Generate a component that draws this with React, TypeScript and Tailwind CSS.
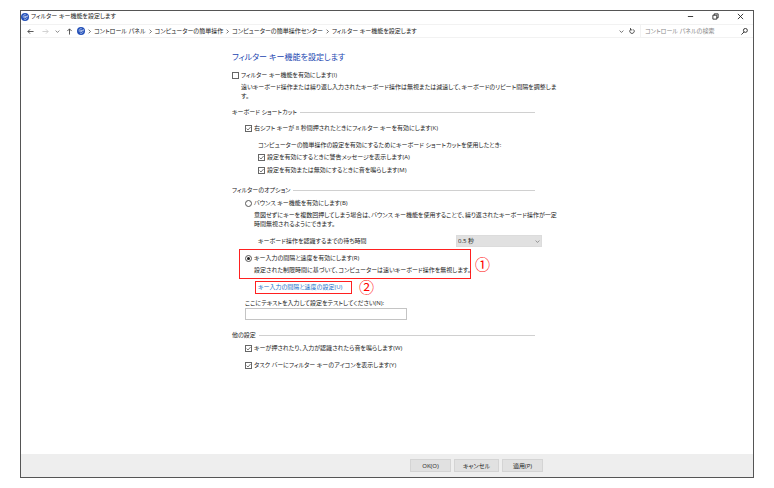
import { useState, type ReactNode } from "react";

const crumbs = [
  "コントロール パネル",
  "コンピューターの簡単操作",
  "コンピューターの簡単操作センター",
  "フィルター キー機能を設定します",
];

function AccessIcon() {
  return (
    <svg viewBox="0 0 16 16" className="size-2 shrink-0" aria-hidden="true">
      <circle cx="8" cy="8" r="8" fill="#2450b8" />
      <path d="M3.500 6.500a5 5 0 0 1 6.500-3M12.500 9.500a5 5 0 0 1-6.500 3" fill="none" stroke="#b9d0f6" strokeWidth="1.3" />
      <path d="M3.500 8h5M7 5.500 9.500 8 7 10.500M12.500 4.500v3h-3" fill="none" stroke="#fff" strokeWidth="1.4" />
    </svg>
  );
}

function Icon({ d, className }: { d: string; className: string }) {
  return (
    <svg viewBox="0 0 16 16" fill="none" stroke="currentColor" strokeWidth="2" className={className} aria-hidden="true">
      <path d={d} />
    </svg>
  );
}

const CHEVRON_DOWN = "M2 5l6 6 6-6";
const CHEVRON_RIGHT = "M5 2l6 6-6 6";

function Check({ label, initial = false }: { label: string; initial?: boolean }) {
  const [checked, setChecked] = useState(initial);
  return (
    <label className="flex h-[10px] items-center gap-[2px] whitespace-nowrap">
      <span className="grid shrink-0">
        <input
          type="checkbox"
          checked={checked}
          onChange={(e) => setChecked(e.target.checked)}
          className="peer col-start-1 row-start-1 size-[7px] appearance-none border border-[#666] bg-white"
        />
        <svg viewBox="0 0 7 7" className="pointer-events-none invisible col-start-1 row-start-1 size-[7px] peer-checked:visible">
          <path d="M1.6 3.6 3 5 5.6 2" fill="none" stroke="#444" strokeWidth="0.7" />
        </svg>
      </span>
      {label}
    </label>
  );
}

function Radio({ label, initial = false }: { label: string; initial?: boolean }) {
  return (
    <label className="flex h-[10px] items-center gap-[2px] whitespace-nowrap">
      <span className="grid shrink-0 place-items-center">
        <input
          type="radio"
          name="filter"
          defaultChecked={initial}
          className="peer col-start-1 row-start-1 size-[7px] appearance-none rounded-full border border-[#555] bg-white"
        />
        <span className="pointer-events-none invisible col-start-1 row-start-1 size-[3px] rounded-full bg-[#222] peer-checked:visible" />
      </span>
      {label}
    </label>
  );
}

function SectionTitle({ children }: { children: ReactNode }) {
  return (
    <h2 className="mr-[7px] flex h-[10px] items-center gap-[3px] whitespace-nowrap">
      {children}
      <span className="h-px flex-1 bg-[#d0d0d0]" />
    </h2>
  );
}

function Mark({ children }: { children: ReactNode }) {
  return <span className="text-[15px] leading-[13px] text-[#ff0000]">{children}</span>;
}

export default function App() {
  return (
    <div className="flex min-h-screen flex-col bg-white px-5 py-[10px] font-['Open_Sans','Noto_Sans_CJK_JP',sans-serif] text-[6px] leading-[9px] text-[#222] [font-feature-settings:'palt']">
      <div className="flex flex-1 flex-col border border-[#555]">
        <header>
          <div className="flex h-[11px] items-center gap-[2px]">
            <AccessIcon />
            <span className="flex-1 whitespace-nowrap">フィルター キー機能を設定します</span>
            <div className="flex items-center gap-[18px] pr-[9px]">
              <button aria-label="最小化">
                <Icon d="M2 8h12" className="size-[7px]" />
              </button>
              <button aria-label="元に戻す">
                <Icon d="M2 5h9v9H2zM5 5V2h9v9h-3" className="size-[7px]" />
              </button>
              <button aria-label="閉じる">
                <Icon d="M2 2l12 12M14 2L2 14" className="size-[7px]" />
              </button>
            </div>
          </div>

          <div className="mt-[2px] flex h-[14px] items-center border-y border-[#f2f2f2]">
            <div className="flex items-center gap-[6px] pl-[6px] text-[#444]">
              <button aria-label="戻る">
                <Icon d="M15 8H2M7 3L2 8l5 5" className="size-[7px]" />
              </button>
              <button aria-label="進む" className="pl-[2px] text-[#ccc]">
                <Icon d="M1 8h13M9 3l5 5-5 5" className="size-[7px]" />
              </button>
              <button aria-label="履歴">
                <Icon d={CHEVRON_DOWN} className="size-[5px]" />
              </button>
              <button aria-label="上へ">
                <Icon d="M8 15V2M3 7l5-5 5 5" className="size-[7px]" />
              </button>
            </div>
            <nav className="ml-1 flex flex-1 items-center gap-[2px] whitespace-nowrap">
              <AccessIcon />
              {crumbs.map((crumb) => (
                <span key={crumb} className="flex items-center gap-[2px]">
                  <Icon d={CHEVRON_RIGHT} className="size-[5px]" />
                  <a href="#">{crumb}</a>
                </span>
              ))}
            </nav>
            <button aria-label="以前の場所">
              <Icon d={CHEVRON_DOWN} className="size-[5px]" />
            </button>
            <button aria-label="更新" className="ml-[5px]">
              <Icon d="M4 4a6 6 0 1 0 8 0M4 0v5h5" className="size-[6px]" />
            </button>
            <div className="ml-[5px] flex h-full w-[113px] items-center border-l border-[#f2f2f2] pr-[5px] pl-[4px]">
              <input
                type="search"
                aria-label="検索"
                placeholder="コントロール パネルの検索"
                className="min-w-0 flex-1 bg-transparent placeholder:text-[#888]"
              />
              <Icon d="M10 1a4.500 4.500 0 1 1 0 9a4.500 4.500 0 1 1 0-9M7 9l-6 6" className="size-[7px]" />
            </div>
          </div>
        </header>

        <main className="mx-auto w-full max-w-[310px] flex-1 pt-[13px] pb-4">
          <h1 className="text-[8px] leading-[12px] whitespace-nowrap text-[#1a45b0]">
            フィルター キー機能を設定します
          </h1>
          <div className="mt-[7px]">
            <Check label="フィルター キー機能を有効にします(I)" />
          </div>
          <p className="mt-[3px] pl-[9px] whitespace-nowrap">
            遠いキーボード操作または繰り返し入力されたキーボード操作は無視または減速して、キーボードのリピート間隔を調整しま
            <br />
            す。
          </p>

          <section className="mt-[6px]">
            <SectionTitle>キーボード ショートカット</SectionTitle>
            <div className="mt-[6px] pl-[13px]">
              <Check label="右シフト キーが 8 秒間押されたときにフィルター キーを有効にします(K)" initial />
              <div className="mt-[7px] pl-[13px]">
                <p className="leading-[10px] whitespace-nowrap">
                  コンピューターの簡単操作の設定を有効にするためにキーボード ショートカットを使用したとき:
                </p>
                <div className="mt-[2px] flex flex-col gap-[3px]">
                  <Check label="設定を有効にするときに警告メッセージを表示します(A)" initial />
                  <Check label="設定を有効または無効にするときに音を鳴らします(M)" initial />
                </div>
              </div>
            </div>
          </section>

          <section className="mt-[10px]">
            <SectionTitle>フィルターのオプション</SectionTitle>
            <div className="mt-[3px] pl-[13px]">
              <Radio label="バウンス キー機能を有効にします(B)" />
              <p className="mt-[3px] pl-[9px] whitespace-nowrap">
                意図せずにキーを複数回押してしまう場合は、バウンス キー機能を使用することで、繰り返されたキーボード操作が一定
                <br />
                時間無視されるようにできます。
              </p>
              <div className="mt-[6px] flex h-[12px] items-center justify-between pl-[13px]">
                <label htmlFor="wait">キーボード操作を認識するまでの待ち時間</label>
                <div className="grid w-[86px] items-center">
                  <select
                    id="wait"
                    className="col-start-1 row-start-1 h-[12px] appearance-none border border-[#dcdcdc] bg-[#e1e1e1] pl-px leading-[10px]"
                  >
                    <option>0.5 秒</option>
                    <option>1 秒</option>
                    <option>2 秒</option>
                  </select>
                  <Icon
                    d={CHEVRON_DOWN}
                    className="pointer-events-none col-start-1 row-start-1 mr-[2px] size-[5px] justify-self-end text-[#666]"
                  />
                </div>
              </div>
            </div>

            <div className="mt-[2px] flex items-center gap-[4px] pl-[7px]">
              <div className="w-[232px] border border-[#ff2020] py-[3px] pl-[5px]">
                <Radio label="キー入力の間隔と速度を有効にします(R)" initial />
                <p className="mt-[3px] pl-[9px] whitespace-nowrap">
                  設定された制限時間に基づいて、コンピューターは速いキーボード操作を無視します。
                </p>
              </div>
              <Mark>①</Mark>
            </div>
            <div className="mt-[2px] flex items-center gap-[7px] pl-[23px]">
              <div className="flex h-[13px] w-[97px] items-center border border-[#ff2020] pl-[2px] whitespace-nowrap">
                <a href="#" className="text-[#1a70c8]">
                  キー入力の間隔と速度の設定(U)
                </a>
              </div>
              <Mark>②</Mark>
            </div>
            <div className="mt-[4px] pl-[13px]">
              <label htmlFor="test" className="block leading-[10px]">
                ここにテキストを入力して設定をテストしてください(N):
              </label>
              <input id="test" type="text" className="block h-[12px] w-[162px] border border-[#c4c4c4] px-[2px]" />
            </div>
          </section>

          <section className="mt-[10px]">
            <SectionTitle>他の設定</SectionTitle>
            <div className="mt-[3px] flex flex-col gap-[7px] pl-[13px]">
              <Check label="キーが押されたり、入力が認識されたら音を鳴らします(W)" initial />
              <Check label="タスク バーにフィルター キーのアイコンを表示します(Y)" initial />
            </div>
          </section>
        </main>

        <footer className="bg-[#eee] py-[5px]">
          <div className="mx-auto flex max-w-[312px] justify-end gap-[3px]">
            <button className="h-[13px] w-[41px] border border-[#d4d4d4] bg-[#e1e1e1] leading-[10px]">OK(O)</button>
            <button className="h-[13px] w-[45px] border border-[#d4d4d4] bg-[#e1e1e1] leading-[10px]">キャンセル</button>
            <button className="h-[13px] w-[41px] border border-[#d4d4d4] bg-[#e1e1e1] leading-[10px]">適用(P)</button>
          </div>
        </footer>
      </div>
    </div>
  );
}
